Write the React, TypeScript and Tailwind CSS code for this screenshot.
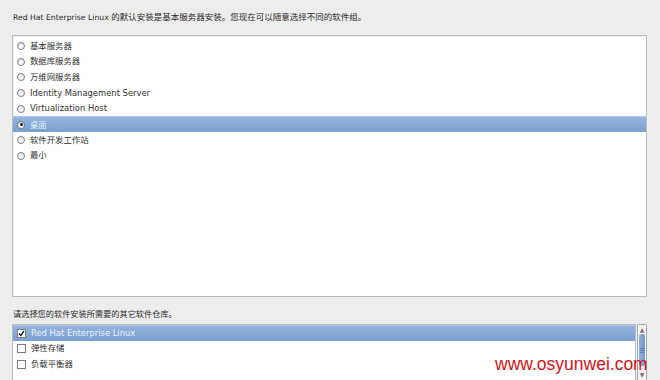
const latin = "font-['DejaVu_Sans','Noto_Sans_CJK_SC',sans-serif]";

const groups = [
  "基本服务器",
  "数据库服务器",
  "万维网服务器",
  "Identity Management Server",
  "Virtualization Host",
  "桌面",
  "软件开发工作站",
  "最小",
];

const repos = [
  { name: "Red Hat Enterprise Linux", checked: true },
  { name: "弹性存储", checked: false },
  { name: "负载平衡器", checked: false },
];

function Radio({ on }: { on: boolean }) {
  return (
    <span className="flex h-[8px] w-[8px] items-center justify-center rounded-full border border-[#7d7d7d] bg-gradient-to-b from-[#e6e6e6] to-white">
      {on && <span className="h-[3px] w-[3px] rounded-full bg-black" />}
    </span>
  );
}

function Check({ on }: { on: boolean }) {
  return (
    <span className="flex h-[9px] w-[9px] items-center justify-center border border-[#7d7d7d] bg-white">
      {on && (
        <svg width="7" height="7" viewBox="0 0 7 7">
          <path d="M1 3.6 L2.8 5.4 L6 1.2" fill="none" stroke="#111" strokeWidth="1.4" />
        </svg>
      )}
    </span>
  );
}

function Row({ selected, children, label }: { selected: boolean; children: React.ReactNode; label: string }) {
  return (
    <div
      className={
        "flex h-[15.7px] items-center pl-[4px] " +
        (selected ? "border-t border-[#b2c6e6] bg-gradient-to-b from-[#93b5df] to-[#7a9ecf] text-[#eef3fb]" : "text-[#303030]")
      }
    >
      {children}
      <span className="ml-[5px] text-[8.4px] leading-none">{label}</span>
    </div>
  );
}

export default function App() {
  return (
    <div className={`relative h-[380px] w-[660px] overflow-hidden bg-[#ededed] pl-[12px] pr-[13px] pt-[11px] ${latin}`}>
      <p className="h-[12px] pl-[1px] text-[7.7px] leading-[12px] text-[#2a2a2a]">
        Red Hat Enterprise Linux <span className="text-[8.5px]">的默认安装是基本服务器安装。您现在可以随意选择不同的软件组。</span>
      </p>

      <div className="mt-[12px] h-[262px] border border-[#bcbcbc] bg-white pt-[2px] shadow-[inset_1px_1px_1px_rgba(0,0,0,0.08)]">
        {groups.map((g, i) => (
          <Row key={g} selected={i === 5} label={g}>
            <Radio on={i === 5} />
          </Row>
        ))}
      </div>

      <p className="mt-[11px] h-[12px] pl-[1px] text-[8.2px] leading-[12px] text-[#2a2a2a]">
        请选择您的软件安装所需要的其它软件仓库。
      </p>

      <div className="mt-[4px] flex">
        <div className="h-[60px] w-[625px] border border-[#bcbcbc] bg-white">
          {repos.map((r) => (
            <Row key={r.name} selected={r.checked} label={r.name}>
              <Check on={r.checked} />
            </Row>
          ))}
        </div>
        <div className="ml-[1px] flex h-[60px] w-[10px] flex-col rounded-[2px] border border-[#a8a8a8] bg-[#f4f4f4]">
          <div className="flex h-[9px] items-center justify-center text-[6px] leading-none text-[#777]">▲</div>
          <div className="mx-[1px] flex h-[32px] flex-col items-center justify-center gap-[1px] rounded-[2px] bg-gradient-to-r from-[#8fb0dc] to-[#7398cc]">
            <span className="h-px w-[4px] bg-[#5d80b5]" />
            <span className="h-px w-[4px] bg-[#5d80b5]" />
            <span className="h-px w-[4px] bg-[#5d80b5]" />
          </div>
          <div className="flex grow items-center justify-center text-[6px] leading-none text-[#777]">▼</div>
        </div>
      </div>

      <span className="absolute left-[495px] top-[356px] font-['Liberation_Sans',sans-serif] text-[17.5px] leading-none text-[#d0141c]">
        www.osyunwei.com
      </span>
    </div>
  );
}
